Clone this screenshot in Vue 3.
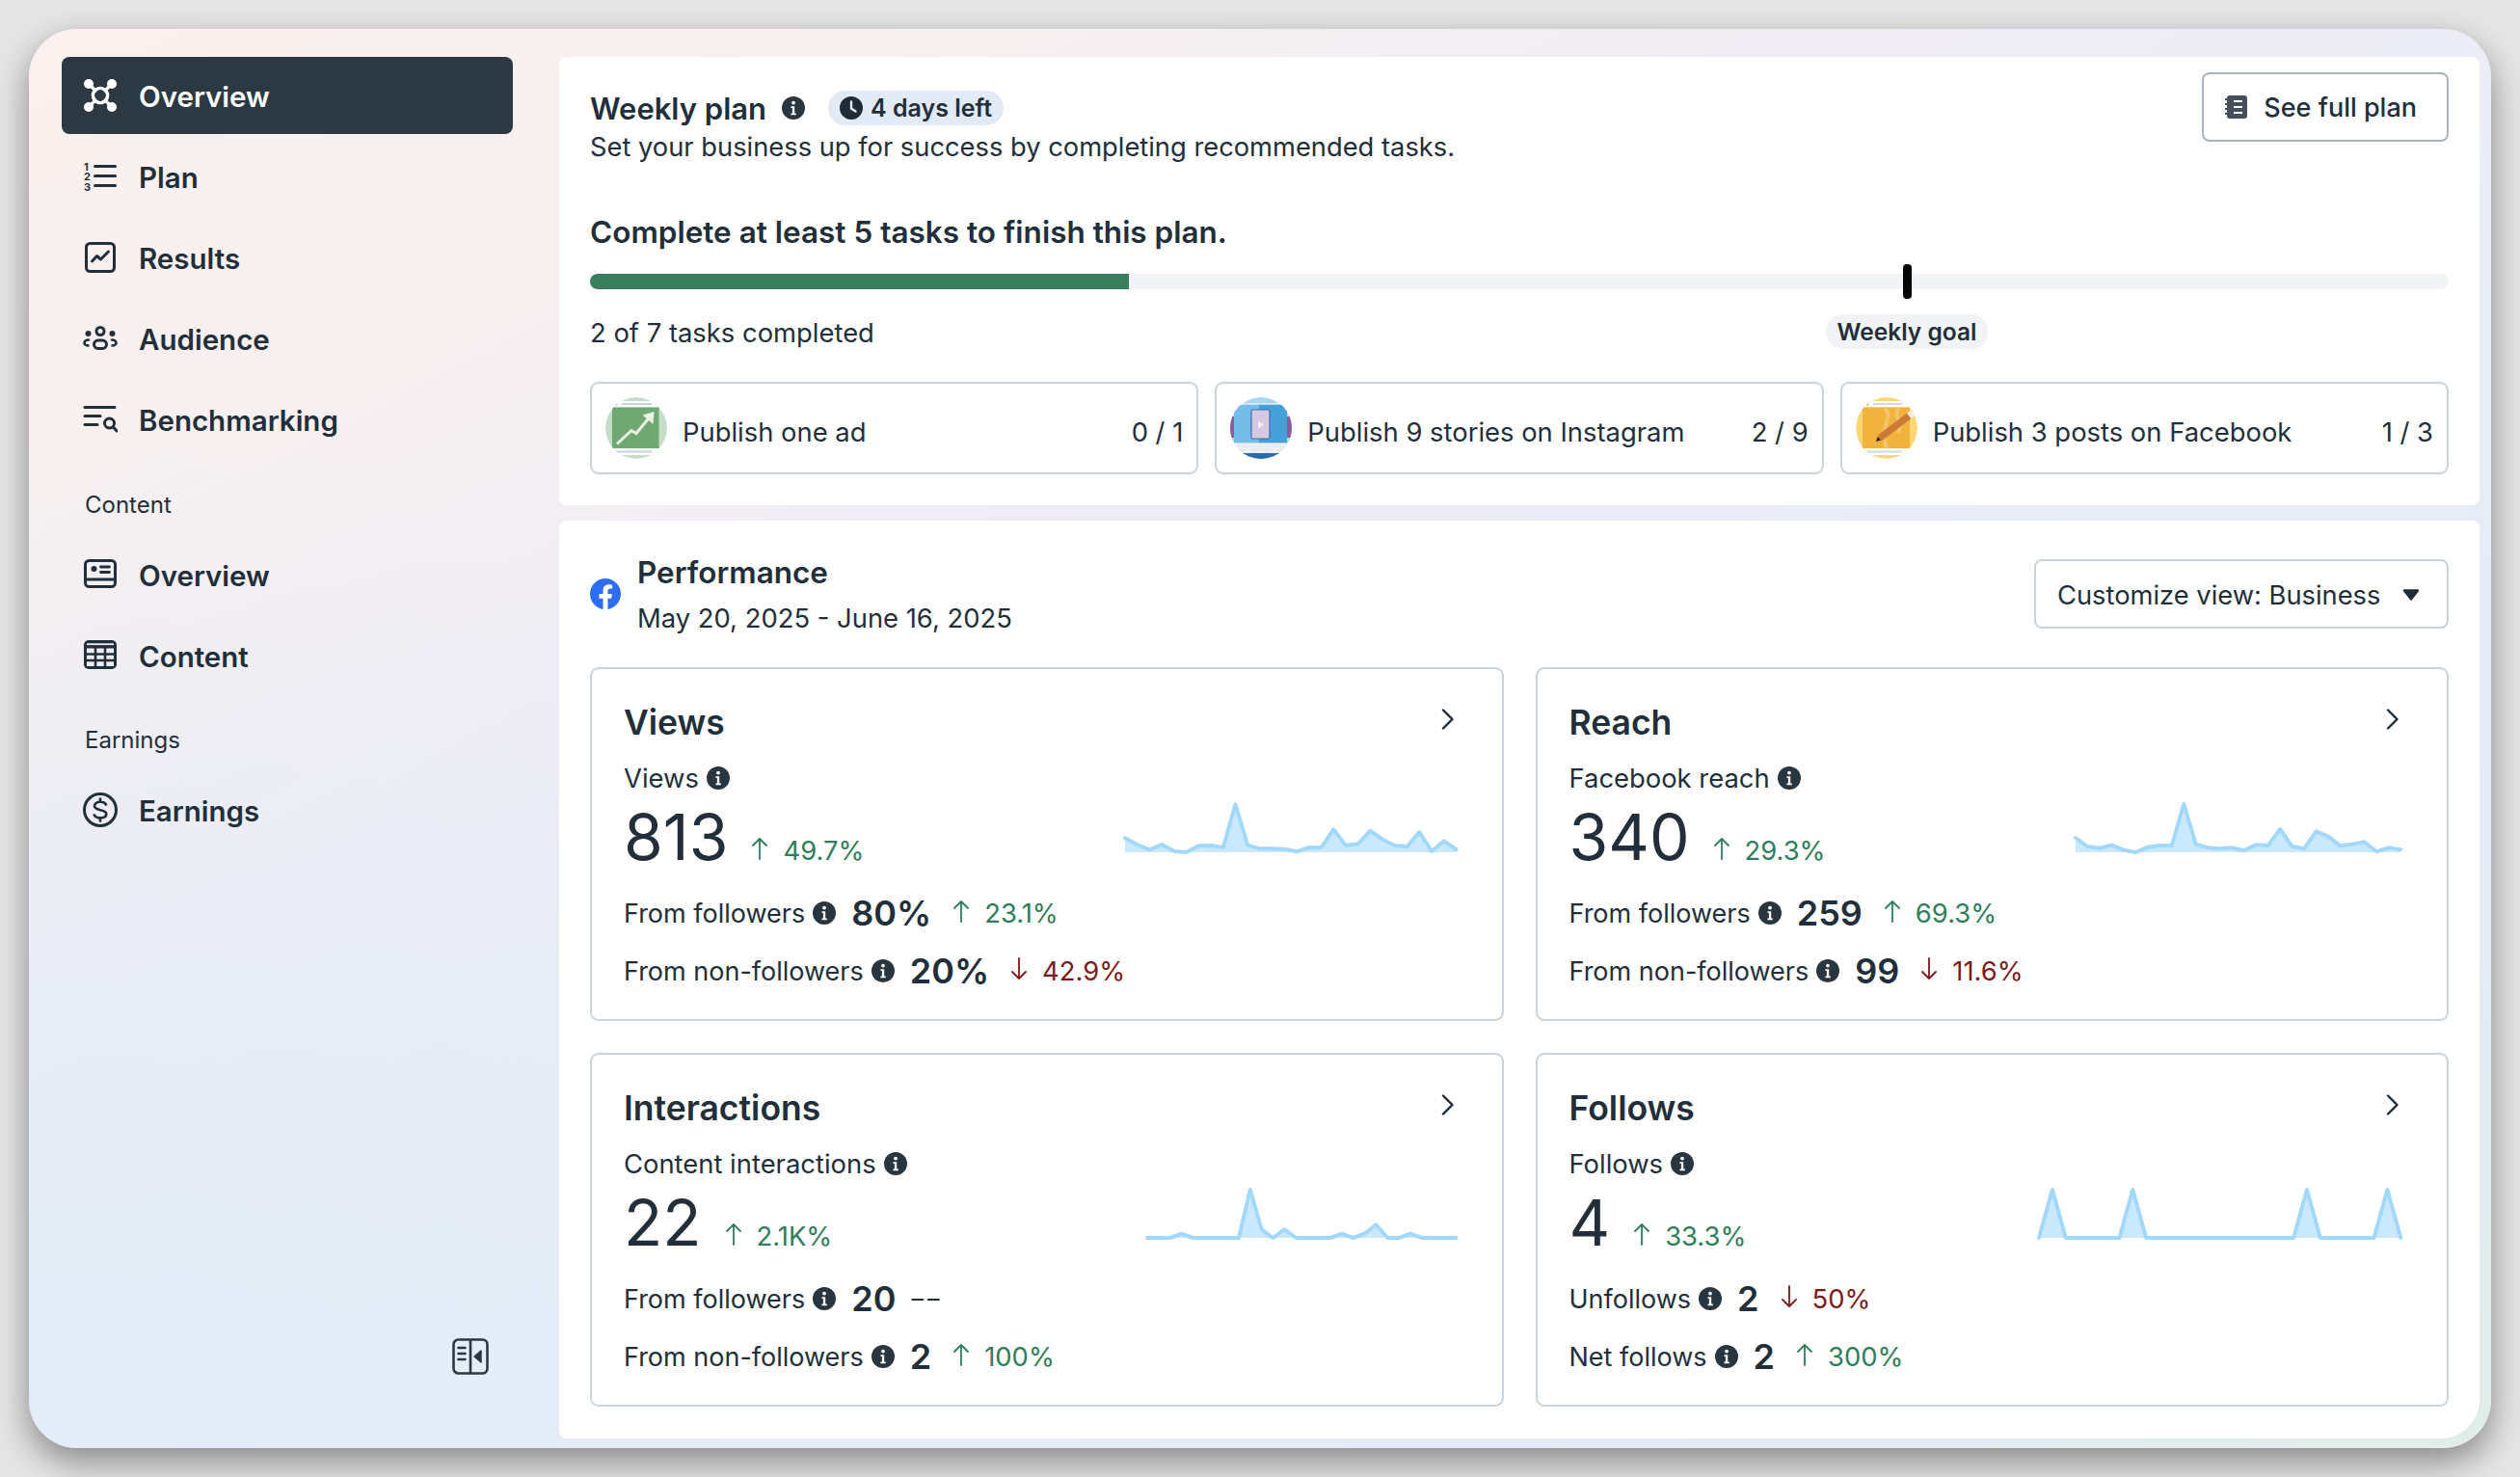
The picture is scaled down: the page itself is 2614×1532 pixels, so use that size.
<template>
  <div class="page">
    <div class="window">
      <aside class="sidebar">
        <nav class="nav-group">
          <a v-for="item in mainNav" :key="item.label" :class="['nav-item', { active: item.active }]">
            <span class="nav-icon"><NavIcon :name="item.icon" /></span>
            <span>{{ item.label }}</span>
          </a>
        </nav>
        <div class="nav-label">Content</div>
        <nav class="nav-group">
          <a v-for="item in contentNav" :key="item.label" class="nav-item">
            <span class="nav-icon"><NavIcon :name="item.icon" /></span>
            <span>{{ item.label }}</span>
          </a>
        </nav>
        <div class="nav-label tight">Earnings</div>
        <nav class="nav-group">
          <a class="nav-item">
            <span class="nav-icon"><NavIcon name="earnings" /></span>
            <span>Earnings</span>
          </a>
        </nav>
        <button class="collapse-btn" aria-label="Collapse">
          <svg width="40" height="40" viewBox="0 0 40 40" fill="none" stroke="#2b3842" stroke-width="2.6">
            <rect x="2.5" y="2.5" width="35" height="35" rx="5" />
            <path d="M20 3v34" />
            <path d="M7.5 11h7M7.5 17h7M7.5 23h7" stroke-linecap="round" />
            <path d="M31 14v12l-7-6z" fill="#2b3842" stroke-width="1.5" stroke-linejoin="round" />
          </svg>
        </button>
      </aside>

      <main class="main">
        <section class="panel plan">
          <div class="plan-head">
            <div class="plan-intro">
              <div class="plan-title">
                <h2>Weekly plan</h2>
                <InfoIcon class="plan-info" />
                <span class="days-badge">
                  <svg width="24" height="24" viewBox="0 0 24 24">
                    <circle cx="12" cy="12" r="12" fill="#1f2c36" />
                    <path d="M12 5.5V12.5l4.5 3" fill="none" stroke="#e2eaf5" stroke-width="2.4" stroke-linecap="round" />
                  </svg>
                  4 days left
                </span>
              </div>
              <p class="plan-sub">Set your business up for success by completing recommended tasks.</p>
            </div>
            <button class="outline-btn">
              <svg width="24" height="24" viewBox="0 0 24 24">
                <rect x="3" y="0" width="21" height="24" rx="3" fill="#454e5a" />
                <path d="M1 4h4M1 9h4M1 14h4M1 19h4" stroke="#454e5a" stroke-width="2" />
                <path d="M10 6h9M10 12h9M10 18h9" stroke="#fff" stroke-width="2.2" />
              </svg>
              See full plan
            </button>
          </div>

          <h3 class="plan-goal">Complete at least 5 tasks to finish this plan.</h3>
          <div class="track">
            <div class="track-fill"></div>
            <div class="track-marker"></div>
          </div>
          <div class="track-caption">
            <span>2 of 7 tasks completed</span>
            <span class="goal-pill">Weekly goal</span>
          </div>

          <div class="tasks">
            <div v-for="task in tasks" :key="task.label" class="task">
              <svg class="thumb" width="64" height="64" viewBox="0 0 64 64">
                <template v-if="task.thumb === 'ad'">
                  <circle cx="32" cy="32" r="32" fill="#c6dec8" />
                  <path d="M0 4h64v6.5H0zM0 53h64v7H0z" fill="#fff" />
                  <rect x="7" y="10.5" width="48.5" height="42.5" fill="#6fa873" />
                  <path d="M17 7h31M10 56.500h38" stroke="#c8d0dc" stroke-width="1.8" />
                  <circle cx="11" cy="7" r="1.400" fill="#2f7d5b" />
                  <path d="M12 48.500 27 34.500 32 37.500 48 18" fill="none" stroke="#eaf0e2" stroke-width="3" />
                  <path d="M38.500 18.500 50.500 15 49.500 28z" fill="#eaf0e2" />
                </template>
                <template v-else-if="task.thumb === 'story'">
                  <circle cx="32" cy="32" r="32" fill="#a9d4f2" />
                  <path d="M0 20h5v22H0zM59 20h5v22h-5z" fill="#8d5c9e" />
                  <rect x="4" y="7.500" width="28" height="40" fill="#75bde9" />
                  <rect x="30" y="7.500" width="29" height="40" fill="#479fd8" />
                  <path d="M0 7h64" stroke="#fff" stroke-width="1.200" />
                  <rect x="22" y="13" width="19" height="30" rx="1.500" fill="#d5c8e0" stroke="#3a6ea5" stroke-width="1.200" />
                  <path d="M29 24.500 35 28.500 29 32.500z" fill="#f1edf5" />
                  <rect x="3" y="47.500" width="58" height="10.500" fill="#eef0f4" />
                  <path d="M3 51h58M3 54.500h58M14 47.500v11M26 47.500v11M38 47.500v11M50 47.500v11" stroke="#dfe3ea" stroke-width=".8" />
                  <rect x="0" y="58" width="64" height="6" fill="#2c6ba5" />
                </template>
                <template v-else>
                  <circle cx="32" cy="32" r="32" fill="#fbd877" />
                  <path d="M0 4h64v6.500H0zM0 53h64v7H0z" fill="#fff" />
                  <rect x="7" y="10.500" width="49" height="42.500" fill="#f2b33d" />
                  <path d="M30 11c10 10-6 18 2 42M44 11c-6 10 6 16 0 26" fill="none" stroke="#f6c566" stroke-width="4" />
                  <path d="M18 7h30M12 56.500h36" stroke="#d5d8dd" stroke-width="1.800" />
                  <circle cx="12" cy="7" r="1.600" fill="#f0941f" />
                  <path d="M24 38.500 53 16.500 57.500 22 28 44.500 21 46z" fill="#cd7a38" />
                  <path d="M53 16.500 57 13.500 61 19 57.500 22z" fill="#f6efe6" />
                  <path d="M21 46 22.500 41 26 44.500z" fill="#3b2a1c" />
                </template>
              </svg>
              <span class="task-label">{{ task.label }}</span>
              <span class="task-count">{{ task.count }}</span>
            </div>
          </div>
        </section>

        <section class="panel performance">
          <div class="perf-head">
            <svg class="fb" width="32" height="32" viewBox="0 0 24 24">
              <path fill="#2d6df6" d="M24 12.070C24 5.400 18.630 0 12 0S0 5.400 0 12.070c0 6.030 4.390 11.020 10.130 11.930v-8.440H7.080v-3.490h3.050V9.410c0-3.020 1.790-4.690 4.530-4.690 1.310 0 2.680.24 2.680.24v2.970h-1.510c-1.490 0-1.960.93-1.960 1.880v2.260h3.330l-.53 3.490h-2.800V24C19.610 23.090 24 18.100 24 12.070z" />
            </svg>
            <div class="perf-title">
              <h2>Performance</h2>
              <p>May 20, 2025 - June 16, 2025</p>
            </div>
            <button class="outline-btn select-btn">
              Customize view: Business
              <svg width="18" height="12" viewBox="0 0 18 12">
                <path d="M2 1.500h14L9 10.500z" fill="#1f2c36" stroke="#1f2c36" stroke-width="2.400" stroke-linejoin="round" />
              </svg>
            </button>
          </div>

          <div class="metrics">
            <article v-for="card in cards" :key="card.title" class="metric">
              <header class="metric-head">
                <h3>{{ card.title }}</h3>
                <svg class="chevron" width="14" height="24" viewBox="0 0 14 24" fill="none">
                  <path d="M2 2.500 11.500 12 2 21.500" stroke="#1f2c36" stroke-width="2.400" stroke-linecap="round" stroke-linejoin="round" />
                </svg>
              </header>
              <div class="metric-body">
                <div>
                  <div class="metric-label">{{ card.label }} <InfoIcon /></div>
                  <div class="metric-value">
                    <span class="big-number">{{ card.value }}</span>
                    <Trend :dir="card.dir" :text="card.delta" />
                  </div>
                </div>
                <svg class="spark" :width="chartWidth(card)" height="60" :viewBox="`0 0 ${chartWidth(card)} 60`">
                  <path :d="areaPath(card)" fill="#cbe9fe" />
                  <path :d="linePath(card)" fill="none" stroke="#a3d8fd" stroke-width="4" stroke-linecap="round" stroke-linejoin="round" />
                </svg>
              </div>
              <div v-for="row in card.rows" :key="row.label" class="metric-row">
                <span class="row-label">{{ row.label }} <InfoIcon /></span>
                <strong class="row-value">{{ row.value }}</strong>
                <Trend v-if="row.dir" :dir="row.dir" :text="row.delta" />
                <span v-else class="no-delta">––</span>
              </div>
            </article>
          </div>
        </section>
      </main>
    </div>
  </div>
</template>

<script setup>
import { h } from 'vue';

const mainNav = [
  { label: 'Overview', icon: 'network', active: true },
  { label: 'Plan', icon: 'plan' },
  { label: 'Results', icon: 'results' },
  { label: 'Audience', icon: 'audience' },
  { label: 'Benchmarking', icon: 'benchmark' }
];

const contentNav = [
  { label: 'Overview', icon: 'post' },
  { label: 'Content', icon: 'table' }
];

const tasks = [
  { label: 'Publish one ad', count: '0 / 1', thumb: 'ad' },
  { label: 'Publish 9 stories on Instagram', count: '2 / 9', thumb: 'story' },
  { label: 'Publish 3 posts on Facebook', count: '1 / 3', thumb: 'post' }
];

// heights above the baseline, read off the reference charts
const follows = Array(28).fill(0);
[1, 7, 20, 26].forEach((i) => { follows[i] = 50; });

const cards = [
  {
    title: 'Views', label: 'Views', value: '813', dir: 'up', delta: '49.7%', step: 12.72,
    points: [14.7, 8, 2.7, 8, 1, 0, 6.7, 7, 5, 49.7, 7.3, 3.7, 3.7, 3.3, 0.7, 5, 4.7, 23.7, 7, 8.7, 22.3, 13.3, 7, 6, 21, 1, 11.7, 3],
    rows: [
      { label: 'From followers', value: '80%', dir: 'up', delta: '23.1%' },
      { label: 'From non-followers', value: '20%', dir: 'down', delta: '42.9%' }
    ]
  },
  {
    title: 'Reach', label: 'Facebook reach', value: '340', dir: 'up', delta: '29.3%', step: 12.48,
    points: [15, 6, 4.3, 7.3, 2.3, 0, 5.3, 7, 7, 50, 8.3, 4.7, 3.7, 4.7, 1.7, 7.7, 7, 24, 6, 3.7, 21.7, 16.3, 6.7, 8.3, 10.7, 0.7, 4.7, 2.7],
    rows: [
      { label: 'From followers', value: '259', dir: 'up', delta: '69.3%' },
      { label: 'From non-followers', value: '99', dir: 'down', delta: '11.6%' }
    ]
  },
  {
    title: 'Interactions', label: 'Content interactions', value: '22', dir: 'up', delta: '2.1K%', step: 11.87,
    points: [0, 0, 0, 4.3, 0, 0, 0, 0, 0, 50, 8.7, 0, 9, 0, 0, 0, 0, 4.3, 0, 4.3, 13.7, 0, 0, 4.3, 0, 0, 0, 0],
    rows: [
      { label: 'From followers', value: '20' },
      { label: 'From non-followers', value: '2', dir: 'up', delta: '100%' }
    ]
  },
  {
    title: 'Follows', label: 'Follows', value: '4', dir: 'up', delta: '33.3%', step: 13.9,
    points: follows,
    rows: [
      { label: 'Unfollows', value: '2', dir: 'down', delta: '50%' },
      { label: 'Net follows', value: '2', dir: 'up', delta: '300%' }
    ]
  }
];

const BASE = 56;

const chartWidth = (card) => Math.round(card.step * (card.points.length - 1) + 6);

const linePath = (card) =>
  card.points.map((p, i) => `${i ? 'L' : 'M'}${(3 + i * card.step).toFixed(1)} ${(BASE - p).toFixed(1)}`).join(' ');

const areaPath = (card) => {
  const end = (3 + (card.points.length - 1) * card.step).toFixed(1);
  return `${linePath(card)} L${end} ${BASE} L3 ${BASE} Z`;
};

// small render-function helpers so the template stays readable
const InfoIcon = (props, { attrs }) =>
  h('svg', { ...attrs, class: ['info', attrs.class], width: 24, height: 24, viewBox: '0 0 24 24' }, [
    h('circle', { cx: 12, cy: 12, r: 12, fill: '#29363f' }),
    h('circle', { cx: 12, cy: 6.6, r: 1.9, fill: '#fff' }),
    h('path', { d: 'M9.500 10.200h3.700v7.300h1.600v1.800H9.500v-1.800h1.400v-5.500H9.500z', fill: '#fff' })
  ]);
InfoIcon.inheritAttrs = false;

const Trend = (props) =>
  h('span', { class: ['trend', props.dir] }, [
    h('svg', { width: 20, height: 24, viewBox: '0 0 20 24', fill: 'none' }, [
      h('path', {
        d: props.dir === 'up' ? 'M10 23V2M3 9l7-7 7 7' : 'M10 1v21M3 15l7 7 7-7',
        stroke: 'currentColor',
        'stroke-width': 1.8,
        'stroke-linecap': 'round',
        'stroke-linejoin': 'round'
      })
    ]),
    h('span', props.text)
  ]);
Trend.props = ['dir', 'text'];

const NavIcon = (props) => {
  const s = { stroke: 'currentColor', fill: 'none', 'stroke-width': 3, 'stroke-linecap': 'round', 'stroke-linejoin': 'round' };
  const f = { fill: 'currentColor' };
  const num = { 'font-size': 11, 'font-family': 'Inter, sans-serif', 'font-weight': 700, x: 1, ...f };
  const icons = {
    network: [
      h('circle', { cx: 18, cy: 18, r: 7.5, ...s, 'stroke-width': 3.6 }),
      h('path', { d: 'M6 6l24 24M30 6 6 30', ...s, 'stroke-width': 3.2 }),
      h('circle', { cx: 18, cy: 18, r: 5.7, fill: '#2c3943' }),
      h('circle', { cx: 6, cy: 6, r: 5, ...f }),
      h('circle', { cx: 30, cy: 6, r: 5, ...f }),
      h('circle', { cx: 6, cy: 30, r: 5, ...f }),
      h('circle', { cx: 30, cy: 30, r: 5, ...f })
    ],
    plan: [
      h('text', { ...num, y: 12 }, '1'),
      h('text', { ...num, y: 22 }, '2'),
      h('text', { ...num, y: 32.5 }, '3'),
      h('path', { d: 'M12.500 7.500h21M12.500 17.500h21M12.500 27.500h21', ...s })
    ],
    results: [
      h('rect', { x: 3.5, y: 3.5, width: 29, height: 29, rx: 4, ...s }),
      h('path', { d: 'M9.500 22l5-5.500 4 3.500 8-8', ...s })
    ],
    audience: [
      h('circle', { cx: 18, cy: 10.500, r: 4, ...s }),
      h('rect', { x: 11.5, y: 20, width: 13, height: 8.500, rx: 4.200, ...s }),
      h('circle', { cx: 5.500, cy: 13, r: 3, ...f }),
      h('circle', { cx: 30.500, cy: 13, r: 3, ...f }),
      h('path', { d: 'M6 19.500c-2.500 0-4.500 1.500-4.500 3S3 25.500 5.500 25.500M30 19.500c2.500 0 4.500 1.500 4.500 3s-1.500 3-4 3', ...s, 'stroke-width': 2.6 })
    ],
    benchmark: [
      h('path', { d: 'M2 5.500h31M2 14.500h16M2 23.500h13', ...s }),
      h('circle', { cx: 27.500, cy: 22, r: 5, ...s }),
      h('path', { d: 'M31.500 26l3.500 4', ...s })
    ],
    post: [
      h('rect', { x: 2.5, y: 3.5, width: 31, height: 27, rx: 4, ...s }),
      h('path', { d: 'M3 23h30', ...s }),
      h('circle', { cx: 11.500, cy: 12, r: 3, ...f }),
      h('path', { d: 'M18.500 10h9M18.500 15.500h9', ...s, 'stroke-width': 2.800 })
    ],
    table: [
      h('rect', { x: 1, y: 2, width: 34, height: 30, rx: 5, ...f }),
      h('path', { d: 'M4 6.200h28', stroke: '#ecedf6', 'stroke-width': 1.800 }),
      h('path', { d: 'M4 10.500h28v18.500H4z', fill: '#ecedf6' }),
      h('path', { d: 'M4 16.500h28M4 23h28M13 10v19M23 10v19', stroke: 'currentColor', 'stroke-width': 2.600 })
    ],
    earnings: [
      h('circle', { cx: 18, cy: 18, r: 16.5, ...s }),
      h('path', { d: 'M24 12.500c-1-1.800-3-2.700-6-2.700-3.600 0-6 1.700-6 4.200 0 5.600 12.300 2.700 12.300 8.200 0 2.600-2.600 4.100-6.300 4.100-3 0-5.200-1-6.300-3M18 6.500v3.300M18 26.300v3.300', ...s, 'stroke-width': 2.6 })
    ]
  };
  return h('svg', { width: 36, height: 36, viewBox: '0 0 36 36' }, icons[props.name]);
};
NavIcon.props = ['name'];
</script>

<style>
html, body {
  margin: 0;
  background: #e6e6e6;
}
</style>

<style scoped>
.page {
  width: 2614px;
  height: 1532px;
  box-sizing: border-box;
  padding: 30px;
  overflow: hidden;
  font-family: Inter, "Noto Sans", sans-serif;
  color: #222f3a;
  background: #e6e6e6;
}

.window {
  display: flex;
  height: 100%;
  border-radius: 50px;
  box-shadow: 0 14px 36px rgba(0, 0, 0, 0.42);
  background:
    radial-gradient(ellipse at 100% 100%, #e1ede9 0%, rgba(225, 237, 233, 0) 30%),
    radial-gradient(ellipse at 0% 100%, #e2edf7 0%, rgba(226, 237, 247, 0) 50%),
    linear-gradient(152deg, #fbf1ee 0%, #f7f0f0 18%, #efecf5 38%, #e8edf8 60%, #e1eaf7 100%);
}

.sidebar {
  position: relative;
  width: 550px;
  box-sizing: border-box;
  padding: 29px 48px 0 34px;
  flex-shrink: 0;
}

.nav-group {
  display: flex;
  flex-direction: column;
  gap: 4px;
}

.nav-item {
  display: flex;
  align-items: center;
  gap: 22px;
  height: 80px;
  padding-left: 22px;
  border-radius: 8px;
  font-size: 29.500px;
  font-weight: 600;
  color: #222f3a;
}

.nav-item > span:last-child {
  padding-top: 1px;
}

.nav-item.active {
  background: #2c3943;
  color: #fff;
}

.nav-icon {
  display: flex;
  width: 36px;
  height: 36px;
}

.nav-label {
  height: 81px;
  padding: 31px 0 0 24px;
  box-sizing: border-box;
  font-size: 24px;
  line-height: 36px;
  color: #222f3a;
}

.nav-label.tight {
  height: 80px;
  padding-top: 30px;
}

.collapse-btn {
  position: absolute;
  left: 438px;
  top: 1357px;
  padding: 0;
  border: none;
  background: none;
  line-height: 0;
}

.main {
  flex: 1;
  display: flex;
  flex-direction: column;
  gap: 16px;
  padding: 29px 12px 10px 0;
  min-width: 0;
}

.panel {
  background: #fff;
  border-radius: 8px;
  padding: 0 32px;
}

.plan {
  height: 465px;
  box-sizing: border-box;
  padding-top: 16px;
}

.plan-head {
  display: flex;
  justify-content: space-between;
  align-items: flex-start;
}

.plan-intro {
  padding-top: 19px;
}

.plan-title {
  display: flex;
  align-items: center;
  height: 36px;
}

.plan-title h2 {
  margin: 0;
  font-size: 31px;
  font-weight: 600;
}

.plan-info {
  margin-left: 16px;
}

.days-badge {
  display: flex;
  align-items: center;
  gap: 8px;
  height: 36px;
  margin-left: 24px;
  padding: 0 12px;
  border-radius: 18px;
  background: #e2eaf5;
  font-size: 25px;
  font-weight: 600;
}

.plan-sub {
  margin: 5px 0 0;
  font-size: 27.300px;
  line-height: 36px;
}

.outline-btn {
  display: flex;
  align-items: center;
  gap: 17px;
  height: 72px;
  padding: 0 31px 0 21px;
  box-sizing: border-box;
  border: 2px solid #a9b4c0;
  border-radius: 8px;
  background: #fff;
  font-family: inherit;
  font-size: 27px;
  font-weight: 500;
  color: #222f3a;
}

.plan-goal {
  margin: 51px 0 0;
  font-size: 31.500px;
  line-height: 38px;
  font-weight: 600;
}

.track {
  position: relative;
  height: 16px;
  margin-top: 24px;
  border-radius: 8px;
  background: #f1f3f7;
}

.track-fill {
  width: 559px;
  height: 100%;
  border-radius: 8px 0 0 8px;
  background: #3a7d5c;
}

.track-marker {
  position: absolute;
  left: 1362px;
  top: -10px;
  width: 9px;
  height: 36px;
  border-radius: 4px;
  background: #050505;
}

.track-caption {
  position: relative;
  height: 36px;
  margin-top: 26px;
  font-size: 27.400px;
  line-height: 39px;
}

.goal-pill {
  position: absolute;
  left: 1282px;
  top: 0;
  width: 168px;
  height: 36px;
  border-radius: 18px;
  background: #f1f3f7;
  font-size: 24.500px;
  line-height: 36px;
  font-weight: 600;
  text-align: center;
}

.tasks {
  display: grid;
  grid-template-columns: repeat(3, 1fr);
  gap: 17px;
  margin-top: 34px;
}

.task {
  display: flex;
  align-items: center;
  gap: 16px;
  height: 96px;
  box-sizing: border-box;
  padding: 0 14px;
  border: 2px solid #cbd2de;
  border-radius: 9px;
  font-size: 27.400px;
}

.thumb {
  flex-shrink: 0;
  border-radius: 50%;
  overflow: hidden;
}

.task-label,
.task-count {
  padding-top: 7px;
}

.task-label {
  flex: 1;
}

.performance {
  flex: 1;
  padding-top: 34px;
  border-bottom-right-radius: 40px;
}

.perf-head {
  display: flex;
  align-items: flex-start;
}

.fb {
  margin: 26px 17px 0 0;
}

.perf-title {
  flex: 1;
}

.perf-title h2 {
  margin: 0;
  font-size: 31.500px;
  line-height: 40px;
  font-weight: 600;
}

.perf-title p {
  margin: 7px 0 0;
  font-size: 27.400px;
  line-height: 40px;
}

.select-btn {
  margin-top: 6px;
  width: 430px;
  padding: 2px 28px 0 22px;
  border-color: #cbd2de;
  font-size: 27.300px;
  font-weight: 400;
  justify-content: space-between;
}

.metrics {
  display: grid;
  grid-template-columns: 1fr 1fr;
  gap: 33px;
  margin-top: 31px;
}

.metric {
  height: 367px;
  box-sizing: border-box;
  padding: 34px 34px 0 33px;
  border: 2px solid #cbd2de;
  border-radius: 9px;
}

.metric-head {
  display: flex;
  justify-content: space-between;
  align-items: flex-start;
  height: 44px;
}

.metric-head h3 {
  margin: 0;
  font-size: 35.500px;
  line-height: 44px;
  font-weight: 600;
}

.chevron {
  margin: 6px 15px 0 0;
}

.metric-body {
  display: flex;
  justify-content: space-between;
  align-items: flex-end;
  margin-top: 17px;
}

.metric-label {
  display: flex;
  align-items: center;
  gap: 8px;
  height: 36px;
  font-size: 27.400px;
}

.metric-value {
  display: flex;
  align-items: baseline;
  gap: 23px;
  height: 72px;
  margin-top: 6px;
}

.big-number {
  font-size: 66px;
  line-height: 74px;
  font-weight: 400;
}

.spark {
  margin: 0 11px 15px 0;
}

.trend {
  display: inline-flex;
  align-items: baseline;
  gap: 14px;
  font-size: 27.400px;
}

.trend svg {
  align-self: center;
}

.trend.up {
  color: #2f7d5b;
}

.trend.down {
  color: #7a1a1e;
}

.metric-row {
  display: flex;
  align-items: center;
  height: 36px;
  margin-top: 24px;
  gap: 16px;
}

.metric-row .trend {
  margin-left: 5px;
}

.metric-body + .metric-row {
  margin-top: 26px;
}

.row-label {
  display: flex;
  align-items: center;
  gap: 8px;
  font-size: 27px;
}

.row-value {
  font-size: 36px;
  font-weight: 600;
}

.no-delta {
  font-size: 25px;
  letter-spacing: 4px;
}
</style>
